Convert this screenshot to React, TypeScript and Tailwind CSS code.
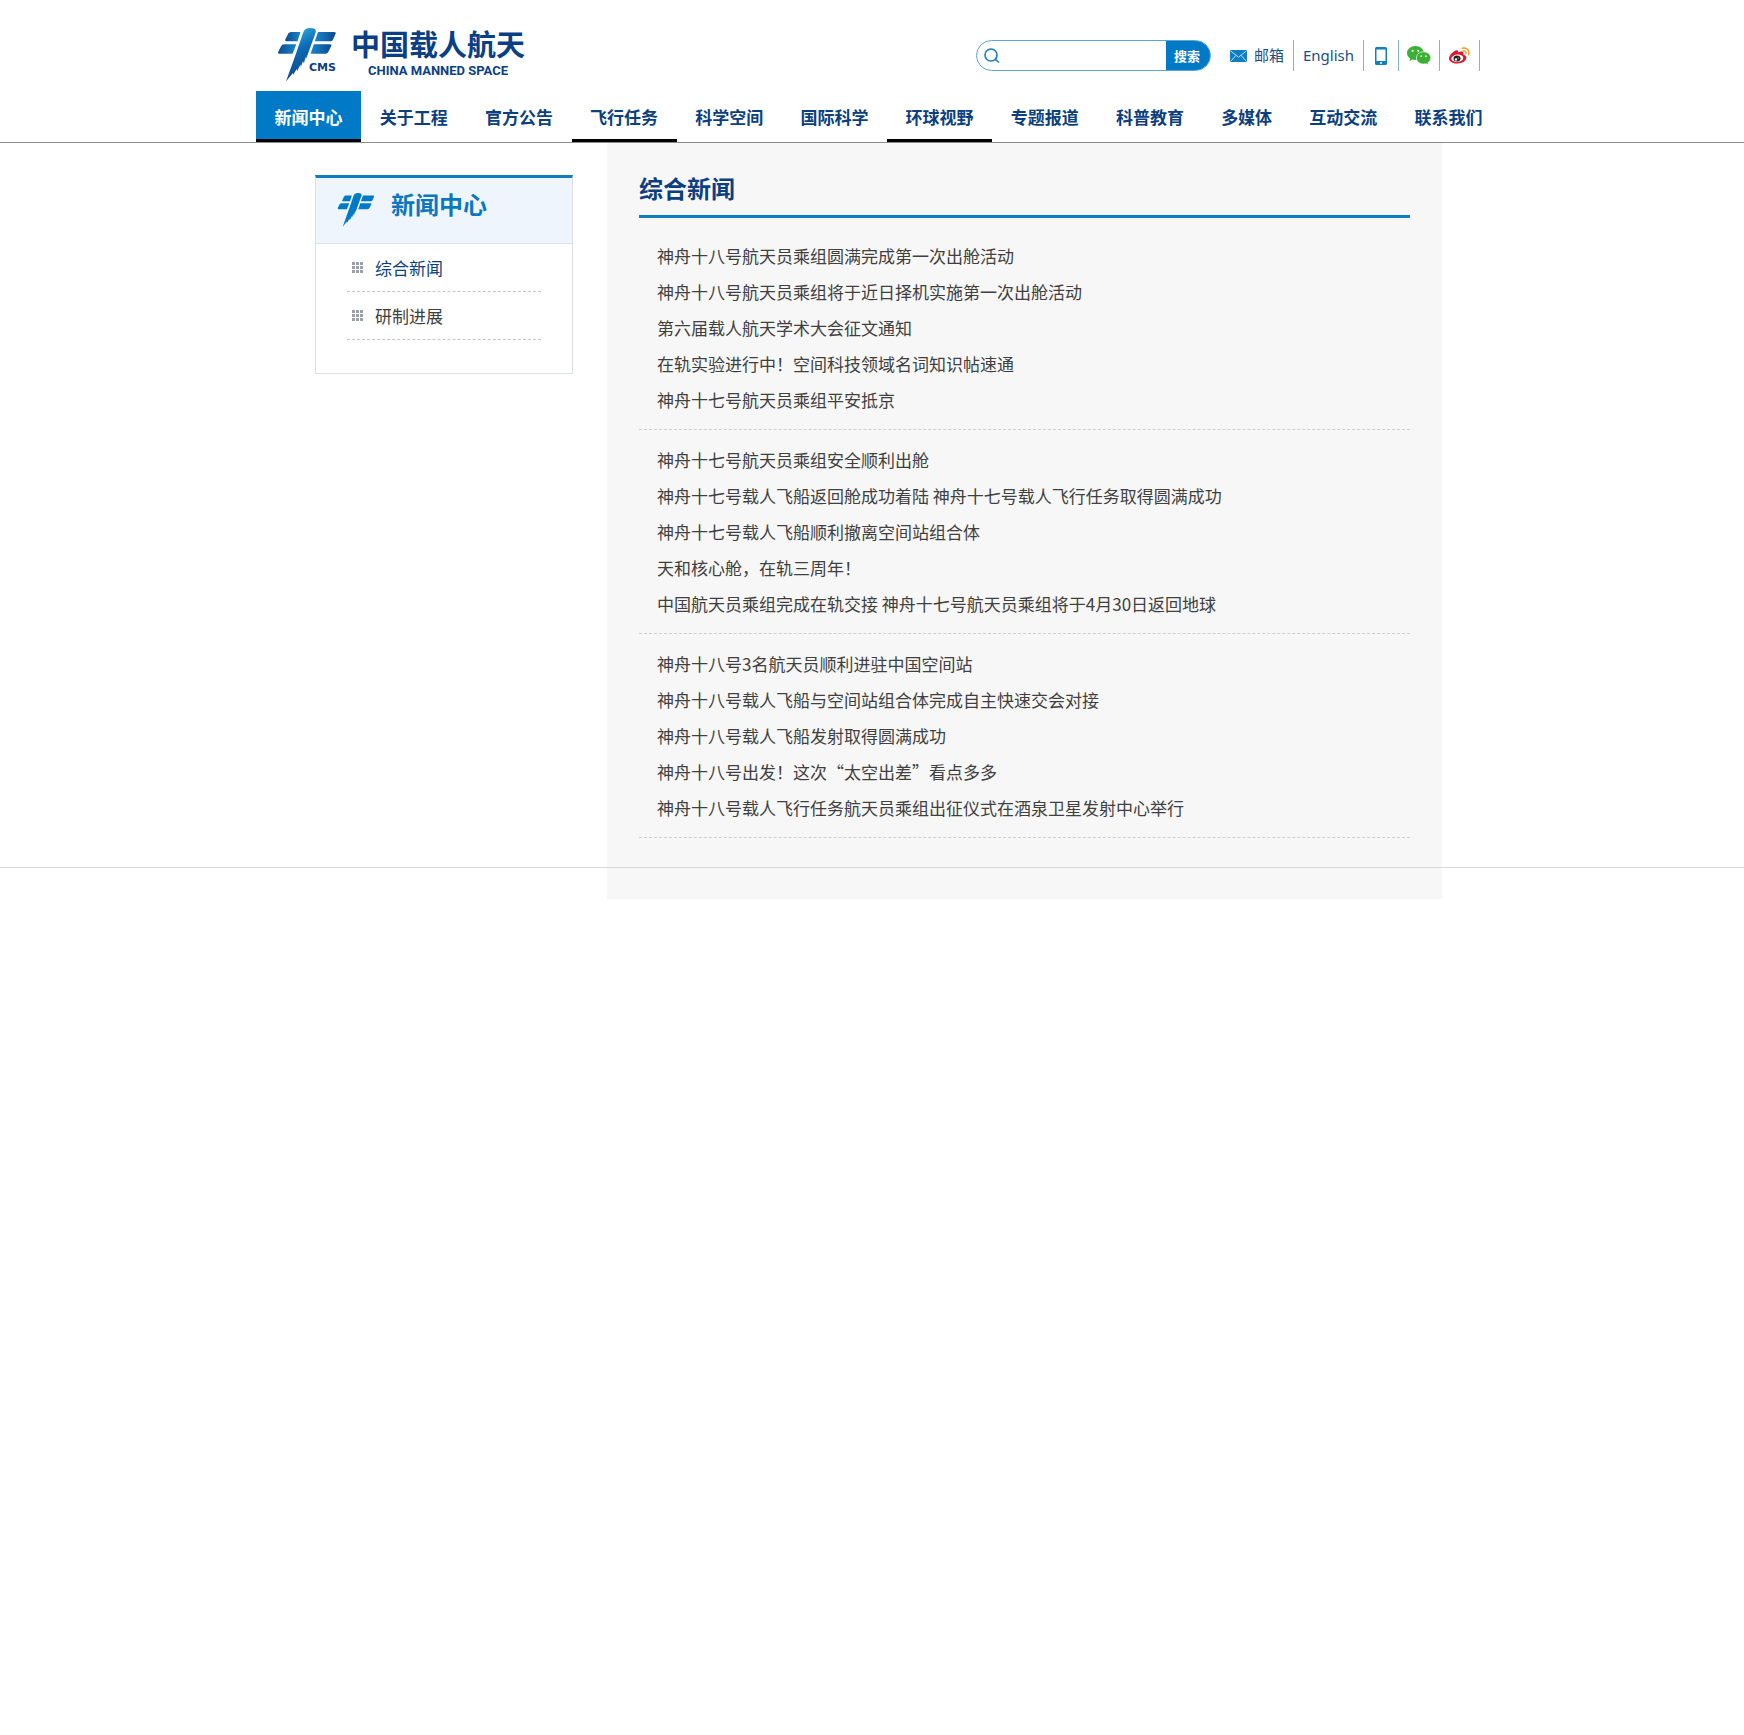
import React from "react";

const NAV = [
  { label: "新闻中心", state: "active" },
  { label: "关于工程", state: "" },
  { label: "官方公告", state: "" },
  { label: "飞行任务", state: "marked" },
  { label: "科学空间", state: "" },
  { label: "国际科学", state: "" },
  { label: "环球视野", state: "marked" },
  { label: "专题报道", state: "" },
  { label: "科普教育", state: "" },
  { label: "多媒体", state: "" },
  { label: "互动交流", state: "" },
  { label: "联系我们", state: "" },
];

const GROUPS = [
  [
    "神舟十八号航天员乘组圆满完成第一次出舱活动",
    "神舟十八号航天员乘组将于近日择机实施第一次出舱活动",
    "第六届载人航天学术大会征文通知",
    "在轨实验进行中！空间科技领域名词知识帖速通",
    "神舟十七号航天员乘组平安抵京",
  ],
  [
    "神舟十七号航天员乘组安全顺利出舱",
    "神舟十七号载人飞船返回舱成功着陆 神舟十七号载人飞行任务取得圆满成功",
    "神舟十七号载人飞船顺利撤离空间站组合体",
    "天和核心舱，在轨三周年！",
    "中国航天员乘组完成在轨交接 神舟十七号航天员乘组将于4月30日返回地球",
  ],
  [
    "神舟十八号3名航天员顺利进驻中国空间站",
    "神舟十八号载人飞船与空间站组合体完成自主快速交会对接",
    "神舟十八号载人飞船发射取得圆满成功",
    "神舟十八号出发！这次“太空出差”看点多多",
    "神舟十八号载人飞行任务航天员乘组出征仪式在酒泉卫星发射中心举行",
  ],
];

const NAV_STATE: Record<string, string> = {
  active: "border-black bg-[#007ac6] text-white",
  marked: "border-black text-[#0b3f7f]",
  "": "border-transparent text-[#0b3f7f]",
};

function Emblem({ className, gradient }: { className: string; gradient?: boolean }) {
  const wing = gradient ? "url(#wing)" : "#007ac6";
  const body = gradient ? "url(#body)" : "#007ac6";
  return (
    <svg className={className} viewBox="0 0 60 54" aria-hidden="true">
      <defs>
        <linearGradient id="wing" x1="0" y1="0" x2="1" y2="0">
          <stop offset="0" stopColor="#0a4a92" />
          <stop offset="1" stopColor="#1b86c8" />
        </linearGradient>
        <linearGradient id="wingRight" x1="0" y1="0" x2="1" y2="0">
          <stop offset="0" stopColor="#1b86c8" />
          <stop offset="1" stopColor="#0a4a92" />
        </linearGradient>
        <linearGradient id="body" x1="0.3" y1="0" x2="0.6" y2="1">
          <stop offset="0" stopColor="#35b0e2" />
          <stop offset="0.4" stopColor="#0c6bb5" />
          <stop offset="1" stopColor="#0b3f7f" />
        </linearGradient>
      </defs>
      <g fill={wing}>
        <path d="M14 4 H23.500 L20.500 13.300 H9.500 Q7.500 13.300 8.300 11.500 L11.300 5.500 Q12.100 4 14 4Z" />
        <path d="M7 16.300 H19.300 L15.600 25.700 H2.500 Q.3 25.700 1.200 24 L4.200 18 Q5 16.300 7 16.300Z" />
      </g>
      <g fill={gradient ? "url(#wingRight)" : "#007ac6"}>
        <path d="M41 4 H57 Q59.400 4 58.600 5.800 L56 11.700 Q55.300 13.300 53.300 13.300 H37.800Z" />
        <path d="M36.800 16.300 H52.800 Q55 16.300 54.200 18 L51.300 24 Q50.500 25.700 48.500 25.700 H33.600Z" />
      </g>
      <path
        fill={body}
        d="M26 5 Q27.500 0 33 0 Q40.500 0 38.500 5 L30.500 27 L29 31 L28.800 28.500 L26.800 35.500 L26 33 L23.800 39 L23.500 36.500 L20.200 43 L19.700 41 L16 47 L15.800 45 L9 53.500 L12 45 L18.500 27Z"
      />
    </svg>
  );
}

function Logo() {
  return (
    <a href="#" aria-label="中国载人航天" className="flex text-[#0b3f85]">
      <span className="relative block h-[54px] w-[64px]">
        <Emblem gradient className="h-[54px] w-[60px]" />
        <span className="absolute top-[34px] left-[32px] font-['DejaVu_Sans',sans-serif] text-[11px] leading-3 font-bold">
          CMS
        </span>
      </span>
      <span className="ml-[10px] flex flex-col items-center">
        <span className="-mt-px text-[29px] leading-8 font-bold">中国载人航天</span>
        <span className="mt-1 font-['Roboto',sans-serif] text-[13px] leading-4 font-bold">CHINA MANNED SPACE</span>
      </span>
    </a>
  );
}

function SearchForm() {
  return (
    <form
      role="search"
      className="flex h-[31px] w-[235px] items-center overflow-hidden rounded-full border border-[#5ba6d4] pl-[7px]"
      onSubmit={(e) => e.preventDefault()}
    >
      <svg className="size-4" viewBox="0 0 16 16" fill="none" stroke="#1b7dbd" strokeWidth="1.600" aria-hidden="true">
        <circle cx="7" cy="7" r="6" />
        <path d="M11.300 11.300 L15 14.500" />
      </svg>
      <input aria-label="搜索" type="text" className="min-w-0 flex-1 px-2 text-sm outline-none" />
      <button type="submit" className="h-full w-11 bg-[#007ac6] pr-[2px] text-[13px] font-bold text-white">
        搜索
      </button>
    </form>
  );
}

function Weibo() {
  return (
    <svg className="h-[17px] w-[21px]" viewBox="0 0 21 17" aria-hidden="true">
      <path
        fill="#e0162b"
        d="M7.800 3.200c1.300-.2 1.700.8 1.300 2.200 2.300-1 5-1.200 5.300.4.1.6 0 1.200-.2 1.700 1.800.5 3.200 1.500 3.200 3.100 0 3-4 6-9 6S0 14.300 0 11.500C0 8.200 4.600 3.600 7.800 3.200Z"
      />
      <ellipse cx="8.300" cy="11.300" rx="6" ry="3.700" fill="#fff" transform="rotate(-6 8.300 11.300)" />
      <ellipse cx="8" cy="11.600" rx="3.500" ry="3" fill="#222" />
      <circle cx="7" cy="12.400" r="1.200" fill="#fff" />
      <circle cx="9.200" cy="11" r=".6" fill="#fff" />
      <g fill="none" stroke="#f39a2b" strokeWidth="1.400" strokeLinecap="round">
        <path d="M13.300 1.200 Q17 .2 19 2.800 Q20.600 5.200 19.500 7.800" />
        <path d="M14 4 Q16 3.500 16.800 4.800 Q17.300 5.700 16.900 6.900" />
      </g>
    </svg>
  );
}

function Tools() {
  const item = "flex h-[31px] items-center border-r border-[#7fb4d3]";
  return (
    <div className="flex text-[15px] text-[#1a4f86]">
      <a href="#" className={item + " gap-[7px] pr-[9px]"}>
        <svg className="h-3 w-[17px]" viewBox="0 0 17 12" aria-hidden="true">
          <rect width="17" height="12" rx="1" fill="#0f7fc4" />
          <path
            d="M.5 .8 L8.500 7.200 L16.500 .8 M.5 11.500 L6 5.300 M16.500 11.500 L11 5.300"
            fill="none"
            stroke="#cfe6f5"
            strokeWidth=".9"
          />
        </svg>
        邮箱
      </a>
      <a href="#" className={item + " px-[9px] font-['Noto_Sans',sans-serif]"}>
        English
      </a>
      <a href="#" aria-label="手机版" className={item + " px-[11px]"}>
        <svg className="h-[18px] w-3" viewBox="0 0 12 18" aria-hidden="true">
          <rect width="12" height="18" rx="1.500" fill="#0f7fc4" />
          <rect x="1.500" y="2.500" width="9" height="11.500" fill="#fff" />
          <circle cx="6" cy="16" r="1" fill="#fff" />
        </svg>
      </a>
      <a href="#" aria-label="微信" className={item + " px-2"}>
        <svg className="h-[19px] w-6" viewBox="0 0 24 19" aria-hidden="true">
          <path
            fill="#3cb034"
            d="M8.500 0C3.800 0 0 3.200 0 7.100c0 2.200 1.200 4.100 3.100 5.400L2.300 15l2.900-1.600c1 .3 2.100.5 3.300.5 4.700 0 8.500-3.100 8.500-6.800S13.200 0 8.500 0Z"
          />
          <path
            fill="#3cb034"
            stroke="#fff"
            strokeWidth=".7"
            d="M16.600 5.800c-4.100 0-7.200 2.700-7.200 6.200s3.100 6.100 7.200 6.100c.9 0 1.800-.1 2.600-.4l2.400 1.200-.6-2.200c1.800-1.100 2.800-2.800 2.800-4.700 0-3.500-3.100-6.200-7.200-6.200Z"
          />
          <g fill="#fff">
            <circle cx="5.600" cy="4.800" r="1.100" />
            <circle cx="11.200" cy="4.800" r="1.100" />
            <circle cx="14.200" cy="10.200" r=".9" />
            <circle cx="18.900" cy="10.200" r=".9" />
          </g>
        </svg>
      </a>
      <a href="#" aria-label="微博" className={item + " px-[9px]"}>
        <Weibo />
      </a>
    </div>
  );
}

function GridDots() {
  return (
    <svg className="size-[11px]" viewBox="0 0 11 11" fill="#9aa0ab" aria-hidden="true">
      {[0, 4, 8].map((y) => [0, 4, 8].map((x) => <rect key={x + "-" + y} x={x} y={y} width="3" height="3" />))}
    </svg>
  );
}

function Sidebar() {
  const link = "flex h-12 items-center gap-3 border-b border-dashed border-[#c4c4c4] pl-[5px]";
  return (
    <aside className="mt-8 w-[258px] shrink-0 border border-t-[3px] border-[#dcdfe3] border-t-[#0f7dbf]">
      <h2 className="flex h-[66px] gap-4 border-b border-[#dcdfe3] bg-[#eef5fd] pt-[10px] pl-[21px] text-2xl leading-8 font-bold text-[#0b77bf]">
        <Emblem className="mt-1 h-[36px] w-[38px]" />
        新闻中心
      </h2>
      <ul className="px-[31px] pb-[33px] text-[17px]">
        <li>
          <a href="#" className={link + " text-[#0b3f7f]"}>
            <GridDots />
            综合新闻
          </a>
        </li>
        <li>
          <a href="#" className={link}>
            <GridDots />
            研制进展
          </a>
        </li>
      </ul>
    </aside>
  );
}

export default function App() {
  return (
    <div className="min-h-screen bg-white font-['Noto_Sans_CJK_SC',sans-serif] text-[#404040]">
      <header className="border-b border-[#8c8c8c]">
        <div className="mx-auto w-[1232px]">
          <div className="flex h-[91px] items-start pl-[21px]">
            <div className="mt-7">
              <Logo />
            </div>
            <div className="mt-10 ml-auto flex gap-[19px] pr-2">
              <SearchForm />
              <Tools />
            </div>
          </div>
          <nav className="flex w-[1245px]">
            {NAV.map((n) => (
              <a
                key={n.label}
                href="#"
                className={
                  "flex h-[51px] flex-auto items-center justify-center border-b-[3px] px-[18px] pt-[3px] text-[17px] font-bold whitespace-nowrap " +
                  NAV_STATE[n.state]
                }
              >
                {n.label}
              </a>
            ))}
          </nav>
        </div>
      </header>

      <div className="mx-auto flex w-[1140px] items-start justify-between pl-[13px]">
        <Sidebar />
        <main className="w-[835px] bg-[#f7f7f7] px-8 pt-[25px] pb-[61px]">
          <h1 className="h-[50px] border-b-[3px] border-[#0f7dbf] text-2xl leading-10 font-bold text-[#0b3f7f]">综合新闻</h1>
          <div className="pt-2">
            {GROUPS.map((g) => (
              <ul
                key={g[0]}
                className="border-b border-dashed border-[#cfcfcf] pt-3 pb-[11px] pl-[18px] text-[17px] leading-9"
              >
                {g.map((t) => (
                  <li key={t}>
                    <a href="#">{t}</a>
                  </li>
                ))}
              </ul>
            ))}
          </div>
        </main>
      </div>
      <footer className="relative -mt-8 border-t border-[#d8d8d8]" />
    </div>
  );
}
